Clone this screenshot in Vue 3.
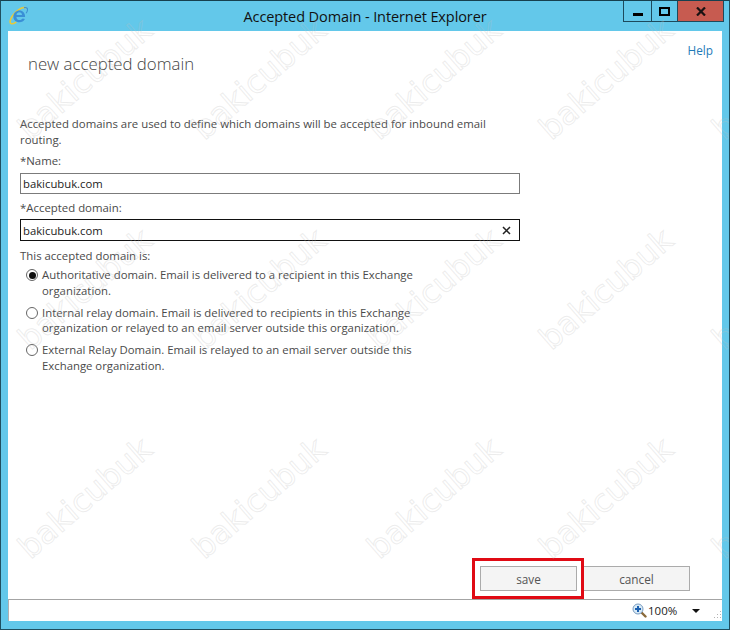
<script setup>
const radios = [
  { checked: true, lines: ['Authoritative domain. Email is delivered to a recipient in this Exchange', 'organization.'] },
  { checked: false, lines: ['Internal relay domain. Email is delivered to recipients in this Exchange', 'organization or relayed to an email server outside this organization.'] },
  { checked: false, lines: ['External Relay Domain. Email is relayed to an email server outside this', 'Exchange organization.'] }
]
const marks = []
for (const y of [78, 288, 497]) {
  for (const x of [84, 258, 433, 605, 778]) marks.push({ x, y })
}
</script>

<template>
  <div class="window">
    <header class="titlebar">
      <div class="tb-left">
        <svg class="ie" viewBox="0 0 20 20" width="20" height="20">
          <path d="M16.5 1.6C11 .6 2.4 9 1.2 15c-.6 3.2 2.4 3.6 5.6 1.4" fill="none" stroke="#e9c93a" stroke-width="1.6" stroke-linecap="round"/>
          <path d="M4.4 10.8C4.4 6.8 7.2 4.4 10.4 4.4c3.5 0 5.7 2.6 5.7 6.5H7.4c.2 2.1 1.5 3.2 3.2 3.2 1.3 0 2.3-.6 3.1-1.5l2.2.4c-1.1 2.2-3.1 3.3-5.4 3.3-3.5 0-6.1-2.2-6.1-5.5zM7.5 8.9h5.5c-.1-1.6-1.1-2.6-2.7-2.6S7.7 7.3 7.5 8.9z" fill="#3a8fd6"/>
          <path d="M15 1.6c2.6-.6 4 .6 3.4 3-.2.9-.7 1.8-1.3 2.7" fill="none" stroke="#3f8fd0" stroke-width="1.1"/>
        </svg>
      </div>
      <div class="tb-title">Accepted Domain - Internet Explorer</div>
      <div class="tb-right">
        <div class="wbtn min"><span class="min-glyph"></span></div>
        <div class="wbtn max"><span class="max-glyph"></span></div>
        <div class="wbtn close">
          <svg width="10" height="9" viewBox="0 0 10 9"><path d="M1 .5l8 8M9 .5l-8 8" stroke="#1a1212" stroke-width="2.2"/></svg>
        </div>
      </div>
    </header>

    <main class="page">
      <div class="content">
        <div class="help-row"><a class="help">Help</a></div>
        <h1 class="heading">new accepted domain</h1>
        <p class="intro">Accepted domains are used to define which domains will be accepted for inbound email<br>routing.</p>
        <label class="lab lab-name">*Name:</label>
        <div class="field">bakicubuk.com</div>
        <label class="lab lab-domain">*Accepted domain:</label>
        <div class="field focused">
          <span>bakicubuk.com</span>
          <svg width="9" height="9" viewBox="0 0 9 9"><path d="M1 1l7 7M8 1l-7 7" stroke="#222" stroke-width="1.5"/></svg>
        </div>
        <div class="lab lab-is">This accepted domain is:</div>
        <div class="radios">
          <div v-for="r in radios" :key="r.lines[0]" class="radio-row">
            <span class="radio" :class="{ on: r.checked }"></span>
            <div class="radio-text"><div v-for="l in r.lines" :key="l">{{ l }}</div></div>
          </div>
        </div>
      </div>
      <div class="actions">
        <div class="save-wrap"><button class="btn save">save</button></div>
        <button class="btn cancel">cancel</button>
      </div>
    </main>

    <footer class="status">
      <svg width="15" height="15" viewBox="0 0 15 15">
        <path d="M9 9l4.5 4.5" stroke="#8a6a3a" stroke-width="2.4" stroke-linecap="round"/>
        <circle cx="6" cy="6" r="5" fill="#d8eaf6" stroke="#7a9cc0"/>
        <path d="M6 3v6M3 6h6" stroke="#1b5fb0" stroke-width="2"/>
      </svg>
      <span class="zoom">100%</span>
      <span class="arrow"></span>
      <svg class="grip" width="8" height="8" viewBox="0 0 8 8"><g fill="#b4b4b4"><rect x="6" y="0" width="1" height="1"/><rect x="3" y="3" width="1" height="1"/><rect x="6" y="3" width="1" height="1"/><rect x="0" y="6" width="1" height="1"/><rect x="3" y="6" width="1" height="1"/><rect x="6" y="6" width="1" height="1"/></g></svg>
    </footer>

    <div class="marks">
      <span v-for="m in marks" :key="m.x + '-' + m.y" class="mark" :style="{ left: m.x + 'px', top: m.y + 'px' }">bakicubuk</span>
    </div>
  </div>
</template>

<style>
html, body { margin: 0; background: #fff; }
</style>

<style scoped>
.window {
  position: relative;
  width: 730px;
  height: 630px;
  box-sizing: border-box;
  background: #63c8ea;
  border: 1px solid #1f4f60;
  border-top-color: #16404f;
  display: flex;
  flex-direction: column;
  overflow: hidden;
  font-family: "Open Sans", "Noto Sans", sans-serif;
  color: #333;
}
.titlebar {
  height: 30px;
  flex: none;
  display: grid;
  grid-template-columns: 1fr auto 1fr;
}
.tb-left { padding: 5px 0 0 8px; }
.ie { display: block; }
.tb-title {
  font-size: 14.5px;
  color: #111;
  padding-top: 6px;
  line-height: 20px;
  letter-spacing: -0.1px;
}
.tb-right { display: flex; justify-content: flex-end; align-items: flex-start; padding-right: 5px; }
.wbtn {
  height: 20px;
  box-sizing: content-box;
  border: 1px solid #1d4a5c;
  border-top: none;
  margin-left: -1px;
  display: flex;
  align-items: center;
  justify-content: center;
}
.min { width: 27px; }
.max { width: 25px; }
.close { width: 45px; background: #c75b50; }
.min-glyph { width: 10px; height: 3px; background: #000; margin-top: 6px; }
.max-glyph { width: 7px; height: 5px; border: 2px solid #000; }
.page {
  flex: 1;
  margin: 0 7px;
  background: #fff;
  display: flex;
  flex-direction: column;
  min-height: 0;
}
.content { flex: 1; padding: 0 9px 0 12px; font-size: 11.4px; color: #4a4a4a; }
.help-row { display: flex; justify-content: flex-end; padding-top: 11px; height: 16px; }
.help { color: #1f7ab8; font-size: 11.8px; line-height: 16px; }
.heading {
  margin: -7px 0 0 8px;
  font-weight: 300;
  font-size: 16.8px;
  line-height: 26px;
  color: #444;
}
.intro { margin: 39px 0 0; line-height: 16px; }
.lab { display: block; line-height: 16px; }
.lab-name { margin-top: 5px; }
.lab-domain { margin-top: 6px; }
.lab-is { margin-top: 7px; }
.field {
  width: 500px;
  height: 21px;
  box-sizing: border-box;
  margin-top: 4px;
  border: 1px solid #7b7b7b;
  padding: 0 8px 0 2px;
  font-size: 11.3px;
  line-height: 19px;
  color: #222;
  display: flex;
  align-items: center;
  justify-content: space-between;
}
.field.focused { border-color: #111; height: 22px; margin-top: 3px; }
.radios { margin-top: 3px; padding-left: 6px; display: flex; flex-direction: column; gap: 6.5px; }
.radio-row { display: flex; gap: 4px; }
.radio {
  width: 12px;
  height: 12px;
  box-sizing: border-box;
  border: 1px solid #666;
  border-radius: 50%;
  margin-top: 2px;
  flex: none;
  position: relative;
}
.radio.on::after {
  content: "";
  position: absolute;
  inset: 1.5px;
  background: #111;
  border-radius: 50%;
}
.radio-text { line-height: 15.5px; white-space: nowrap; font-size: 11.35px; }
.actions { flex: none; display: flex; padding: 0 31px 0 464px; align-items: center; }
.save-wrap { border: 3px solid #e00a14; padding: 5px 4px 5px 5px; height: 41px; box-sizing: border-box; display: flex; }
.btn {
  height: 25px;
  box-sizing: border-box;
  background: #f4f4f4;
  border: 1px solid #ababab;
  color: #555;
  font: 11.8px "Open Sans", "Noto Sans", sans-serif;
  padding: 0;
}
.save { width: 97px; }
.cancel { width: 106px; border-left: none; }
.status {
  height: 22px;
  flex: none;
  margin: 0 7px 8px;
  background: #fff;
  border-top: 1px solid #a4a4a4;
  border-left: 1px solid #b0b0b0;
  box-sizing: border-box;
  display: flex;
  align-items: center;
  font-size: 11.5px;
  color: #222;
  padding-left: 623px;
}
.zoom { margin-left: 1px; width: 44px; }
.arrow { width: 0; height: 0; border-left: 4px solid transparent; border-right: 4px solid transparent; border-top: 4px solid #111; }
.grip { margin: 8px 0 0 14px; }
.marks { position: absolute; inset: 0; pointer-events: none; }
.mark {
  position: absolute;
  transform: translate(-50%, -50%) rotate(-41deg);
  font-family: "DejaVu Sans", sans-serif;
  font-size: 32px;
  color: transparent;
  -webkit-text-stroke: 1px rgba(190, 190, 190, 0.28);
  white-space: nowrap;
}
</style>
